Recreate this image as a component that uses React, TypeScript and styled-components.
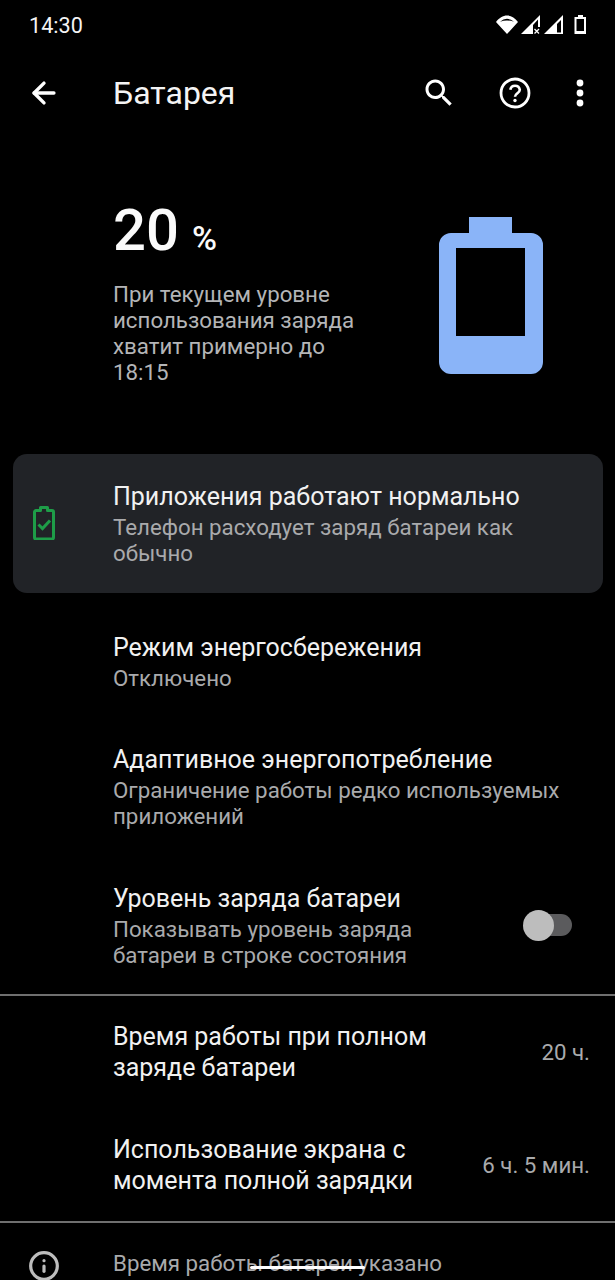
import styled, { createGlobalStyle } from "styled-components";
import { ArrowLeft, Info } from "lucide-react";

const Global = createGlobalStyle`
  html, body {
    margin: 0;
    background: #000;
  }
  body {
    font-family: Roboto, "Noto Sans", sans-serif;
  }
`;

const Screen = styled.div`
  position: relative;
  width: 615px;
  height: 1280px;
  overflow: hidden;
  background: #000;
  color: #fff;
`;

const StatusBar = styled.div`
  height: 50px;
  display: flex;
  align-items: center;
  justify-content: space-between;
  padding: 0 26px 0 29px;
`;

const Time = styled.span`
  font-size: 21.6px;
  font-weight: 400;
  color: #f4f4f4;
`;

const StatusIcons = styled.div`
  display: flex;
  align-items: center;
`;

const Toolbar = styled.div`
  height: 86px;
  display: flex;
  align-items: center;
`;

const BackSlot = styled.div`
  width: 113px;
  padding-left: 27px;
  box-sizing: border-box;
  display: flex;
`;

const Title = styled.h1`
  flex: 1;
  margin: 0;
  font-size: 32px;
  font-weight: 400;
  color: #f4f4f4;
`;

const Actions = styled.div`
  display: flex;
  align-items: center;
  padding-right: 7px;
`;

const IconSlot = styled.div<{ $w: number }>`
  width: ${(p) => p.$w}px;
  display: flex;
  justify-content: center;
`;

const Hero = styled.section`
  display: flex;
  justify-content: space-between;
  padding: 58px 72px 0 113px;
  height: 318px;
  box-sizing: border-box;
`;

const Level = styled.div`
  font-size: 58px;
  font-weight: 500;
  line-height: 72px;
  color: #fafafa;
  span {
    font-size: 34px;
    margin-left: 13px;
  }
`;

const HeroText = styled.p`
  margin: 7px 0 0;
  width: 260px;
  font-size: 22.3px;
  line-height: 26px;
  color: #b4b5b7;
`;

const BatteryArt = styled.div`
  padding-top: 23px;
`;

const Card = styled.div`
  margin: 0 12px 0 13px;
  height: 139px;
  box-sizing: border-box;
  padding: 27px 20px 0 100px;
  position: relative;
  border-radius: 14px;
  background: #212327;
`;

const CardIcon = styled.div`
  position: absolute;
  left: 20px;
  top: 52px;
`;

const Row = styled.div<{ $h: number; $top?: number }>`
  height: ${(p) => p.$h}px;
  box-sizing: border-box;
  padding: ${(p) => p.$top ?? 27}px 25px 0 113px;
  display: flex;
  justify-content: space-between;
  align-items: flex-start;
`;

const NarrowText = styled.div`
  width: 340px;
`;

const RowTitle = styled.div`
  font-size: 25px;
  line-height: 31px;
  color: #f1f1f1;
`;

const RowSub = styled.div`
  font-size: 22.3px;
  line-height: 26px;
  color: #a9aaac;
  margin-top: 2px;
`;

const RowValue = styled.div`
  font-size: 22.3px;
  line-height: 26px;
  margin-top: 18px;
  color: #a9aaac;
  white-space: nowrap;
`;

const Toggle = styled.div`
  position: relative;
  flex: none;
  width: 44px;
  height: 22px;
  margin: 31px 18px 0 0;
  border-radius: 11px;
  background: #5b5b5d;
  &::before {
    content: "";
    position: absolute;
    left: -5px;
    top: -4px;
    width: 31px;
    height: 31px;
    border-radius: 50%;
    background: #bdbdbd;
  }
`;

const Divider = styled.hr`
  margin: 0;
  border: 0;
  height: 2px;
  background: #6f6f6f;
`;

const Footer = styled.div`
  display: flex;
  padding-top: 27px;
`;

const FooterIcon = styled.div`
  width: 113px;
  padding-left: 28px;
  box-sizing: border-box;
  color: #bdbdbd;
  flex: none;
`;

const FooterText = styled.div`
  width: 340px;
  font-size: 22.3px;
  line-height: 26px;
  color: #a9aaac;
`;

const GesturePill = styled.div`
  position: absolute;
  left: 250px;
  bottom: 11px;
  width: 115px;
  height: 3px;
  border-radius: 2px;
  background: #fff;
`;

function StatusGlyphs() {
  return (
    <StatusIcons>
      <svg width="94" height="24" viewBox="0 0 94 24" fill="#fff" fillRule="evenodd">
        <path d="M12 21 1 9C4 5 8 2.500 12 2.500S20 5 23 9ZM5 8.700Q12 3 19 8.700 12 6.500 5 8.700Z" />
        <path d="M26 21 45 2V14H43V6.500L38 12V21Z" />
        <path d="M39.500 16l4.500 4.500m0-4.500l-4.500 4.500" stroke="#fff" strokeWidth="1.300" fill="none" />
        <path d="M49 21 68 2V21ZM62 19.500H66V7L62 11Z" />
        <path d="M83 2h5v2h3v17H79.500V4H83ZM81.500 6v12h7.500V6Z" />
      </svg>
    </StatusIcons>
  );
}

function SearchIcon() {
  return (
    <svg width="36" height="36" viewBox="0 0 24 24" fill="#fff">
      <path d="M15.500 14h-.79l-.28-.27C15.410 12.590 16 11.110 16 9.500 16 5.910 13.090 3 9.500 3S3 5.910 3 9.500 5.910 16 9.500 16c1.610 0 3.090-.59 4.230-1.570l.27.28v.79l5 4.990L20.490 19l-4.990-5zm-6 0C7.010 14 5 11.990 5 9.500S7.010 5 9.500 5 14 7.010 14 9.500 11.990 14 9.500 14z" />
    </svg>
  );
}

function HelpIcon() {
  return (
    <svg width="32" height="32" viewBox="0 0 32 32" fill="none" stroke="#fff" strokeWidth="2.800">
      <circle cx="16" cy="16" r="14" />
      <path d="M11.300 12.800a4.800 4.800 0 0 1 9.500 0c0 3.400-4.800 3.600-4.800 7" strokeWidth="2.600" />
      <circle cx="16" cy="23.500" r="1.700" fill="#fff" stroke="none" />
    </svg>
  );
}

function MoreIcon() {
  return (
    <svg width="8" height="28" viewBox="0 0 8 28" fill="#fff">
      <circle cx="4" cy="4" r="3.400" />
      <circle cx="4" cy="14" r="3.400" />
      <circle cx="4" cy="24" r="3.400" />
    </svg>
  );
}

function BigBattery() {
  return (
    <svg width="104" height="157" viewBox="0 0 104 157">
      <path
        fillRule="evenodd"
        fill="#8ab4f8"
        d="M30 0h43v16h19a12 12 0 0 1 12 12v117a12 12 0 0 1-12 12H12a12 12 0 0 1-12-12V28a12 12 0 0 1 12-12h18ZM17 31v88h69V31Z"
      />
    </svg>
  );
}

function CheckBattery() {
  return (
    <svg width="22" height="34" viewBox="0 0 22 34" fill="none" stroke="#1e9d48" strokeWidth="3">
      <path d="M7.500 4.500V1.500h7v3h4.500a1.500 1.500 0 0 1 1.500 1.500v25.500a1.500 1.500 0 0 1-1.500 1.500H3a1.500 1.500 0 0 1-1.500-1.500V6A1.500 1.500 0 0 1 3 4.500Z" strokeLinejoin="round" />
      <path d="M5.500 18.500l4 4 7.500-8" />
    </svg>
  );
}

export default function App() {
  return (
    <Screen>
      <Global />
      <StatusBar>
        <Time>14:30</Time>
        <StatusGlyphs />
      </StatusBar>
      <Toolbar>
        <BackSlot>
          <ArrowLeft size={34} color="#fff" strokeWidth={2.4} />
        </BackSlot>
        <Title>Батарея</Title>
        <Actions>
          <IconSlot $w={78}>
            <SearchIcon />
          </IconSlot>
          <IconSlot $w={74}>
            <HelpIcon />
          </IconSlot>
          <IconSlot $w={56}>
            <MoreIcon />
          </IconSlot>
        </Actions>
      </Toolbar>
      <Hero>
        <div>
          <Level>
            20<span>%</span>
          </Level>
          <HeroText>
            При текущем уровне использования заряда хватит примерно до 18:15
          </HeroText>
        </div>
        <BatteryArt>
          <BigBattery />
        </BatteryArt>
      </Hero>
      <Card>
        <CardIcon>
          <CheckBattery />
        </CardIcon>
        <RowTitle>Приложения работают нормально</RowTitle>
        <RowSub>Телефон расходует заряд батареи как обычно</RowSub>
      </Card>
      <Row $h={124} $top={39}>
        <div>
          <RowTitle>Режим энергосбережения</RowTitle>
          <RowSub>Отключено</RowSub>
        </div>
      </Row>
      <Row $h={139}>
        <div>
          <RowTitle>Адаптивное энергопотребление</RowTitle>
          <RowSub>Ограничение работы редко используемых приложений</RowSub>
        </div>
      </Row>
      <Row $h={138}>
        <NarrowText>
          <RowTitle>Уровень заряда батареи</RowTitle>
          <RowSub>Показывать уровень заряда батареи в строке состояния</RowSub>
        </NarrowText>
        <Toggle />
      </Row>
      <Divider />
      <Row $h={113} $top={25}>
        <RowTitle>
          Время работы при полном
          <br />
          заряде батареи
        </RowTitle>
        <RowValue>20 ч.</RowValue>
      </Row>
      <Row $h={112} $top={25}>
        <RowTitle>
          Использование экрана с
          <br />
          момента полной зарядки
        </RowTitle>
        <RowValue>6 ч. 5 мин.</RowValue>
      </Row>
      <Divider />
      <Footer>
        <FooterIcon>
          <Info size={32} strokeWidth={2.4} />
        </FooterIcon>
        <FooterText>
          Время работы батареи указано приблизительно и зависит от интенсивности
          использования
        </FooterText>
      </Footer>
      <GesturePill />
    </Screen>
  );
}
